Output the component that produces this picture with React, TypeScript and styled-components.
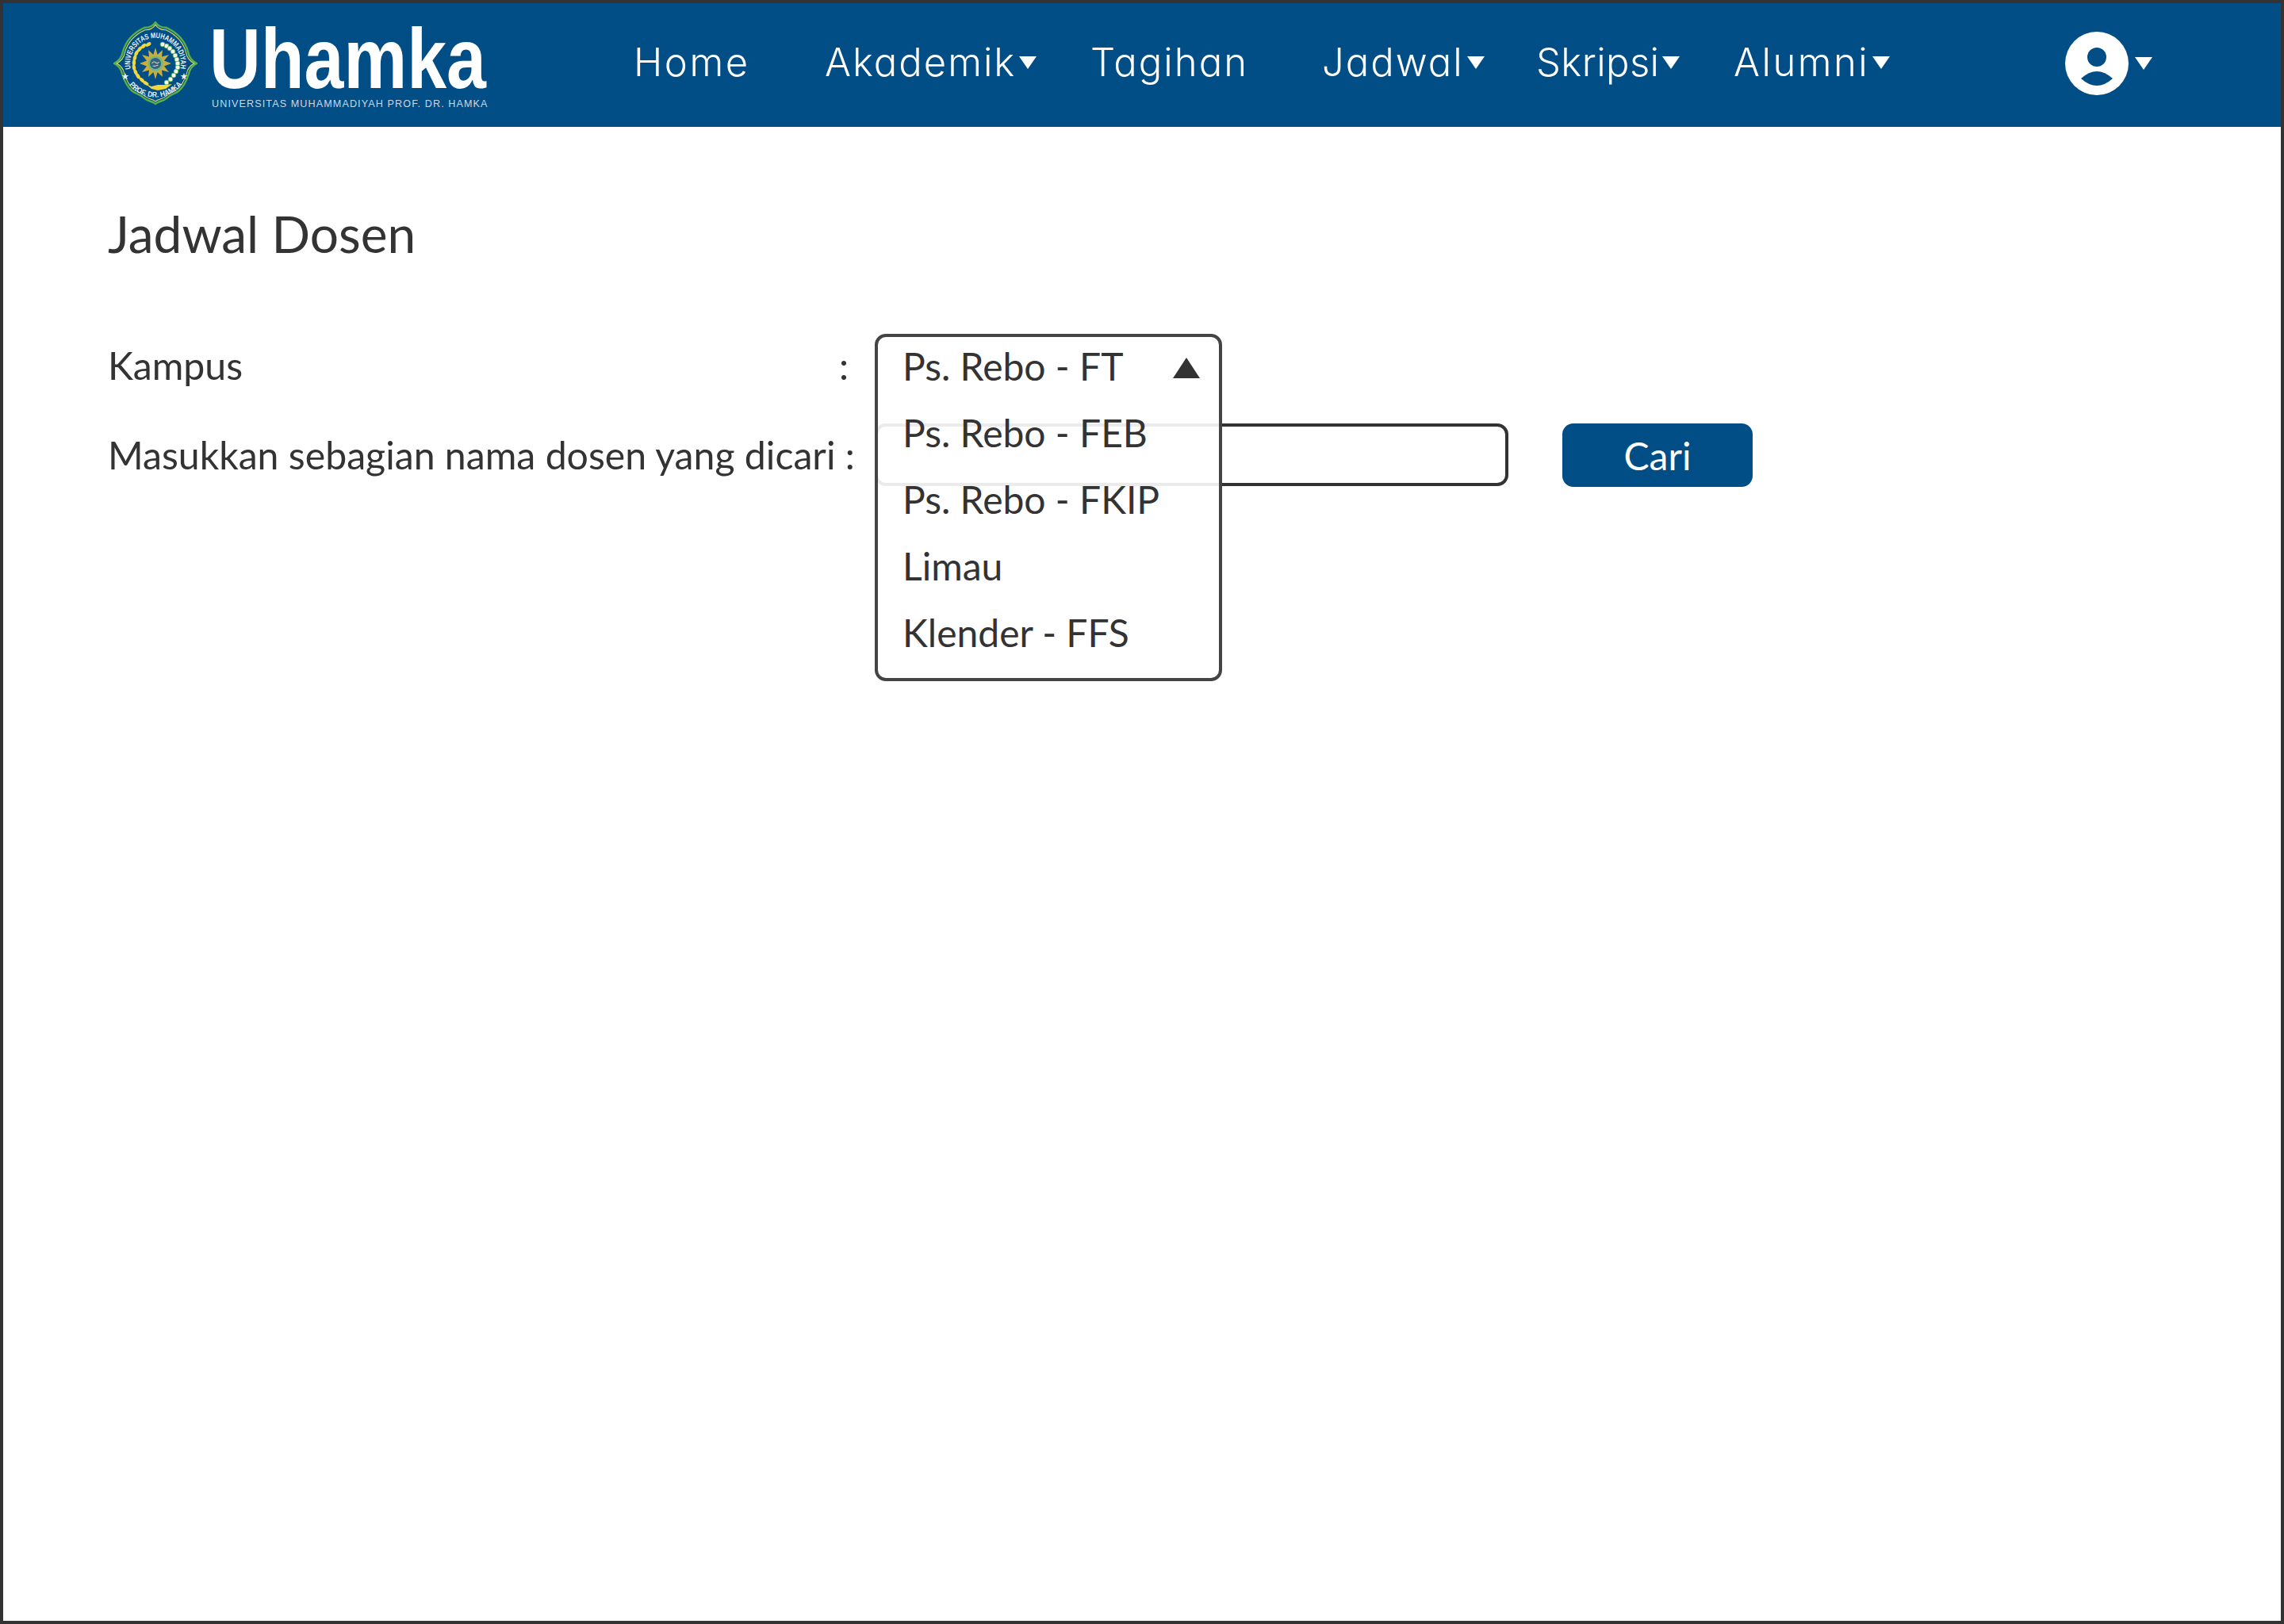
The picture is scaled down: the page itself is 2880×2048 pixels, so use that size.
import React from 'react';
import styled, { createGlobalStyle } from 'styled-components';

const Global = createGlobalStyle`
  html, body { margin: 0; padding: 0; background: #fff; }
  * { box-sizing: border-box; }
`;

const Page = styled.div`
  width: 2880px;
  height: 2048px;
  border: 4px solid #333;
  background: #fff;
  font-family: Lato, "Liberation Sans", sans-serif;
  color: #333;
`;

const Header = styled.header`
  height: 156px;
  background: #014e86;
  display: flex;
  align-items: center;
  padding-left: 139px;
`;

const Brand = styled.div`
  width: 656px;
  display: flex;
  align-items: center;
  gap: 18px;
  padding-bottom: 4px;
`;

const Wordmark = styled.div`
  display: flex;
  flex-direction: column;
  gap: 4px;
  width: 350px;
`;

const BrandName = styled.svg`
  display: block;
  width: 350px;
  height: 97px;
  overflow: visible;
  fill: #fff;
  font-family: "Liberation Sans", sans-serif;
  font-weight: 700;
  font-size: 107px;
`;

const BrandSub = styled.span`
  font-family: "Liberation Sans", sans-serif;
  font-size: 12.6px;
  line-height: 14px;
  letter-spacing: 1.1px;
  color: #c9d6e2;
  white-space: nowrap;
`;

const Nav = styled.nav`
  display: flex;
  align-items: center;
  padding-bottom: 6px;
`;

const NavItem = styled.div<{ $w: number; $ls: number }>`
  width: ${(p) => p.$w}px;
  display: flex;
  align-items: center;
  gap: 4px;
  font-family: Inter, sans-serif;
  font-feature-settings: "cv11";
  font-weight: 300;
  font-size: 49px;
  letter-spacing: ${(p) => p.$ls}px;
  line-height: 60px;
  color: #fff;
  white-space: nowrap;
`;

const Caret = styled.svg`
  width: 22px;
  height: 16px;
  fill: #fff;
  flex: none;
`;

const Account = styled.div`
  margin-left: 250px;
  display: flex;
  align-items: center;
  gap: 8px;
  padding-bottom: 4px;
`;

const Main = styled.main`
  padding: 93px 0 0 132px;
`;

const Title = styled.h1`
  margin: 0;
  font-size: 64px;
  font-weight: 400;
  line-height: 84px;
`;

const Form = styled.div`
  margin-top: 84px;
  display: flex;
  flex-direction: column;
  gap: 34px;
`;

const Row = styled.div`
  display: flex;
  align-items: center;
  height: 79px;
  font-size: 48.2px;
`;

const Label = styled.label`
  width: 967px;
  display: flex;
  justify-content: space-between;
  padding-right: 33px;
  padding-bottom: 1px;
  white-space: nowrap;
`;

const SelectAnchor = styled.div`
  position: relative;
  width: 438px;
  height: 79px;
`;

const Dropdown = styled.div`
  position: absolute;
  z-index: 2;
  top: 0;
  left: 0;
  width: 438px;
  height: 438px;
  border: 4px solid #444;
  border-radius: 14px;
  background: rgba(255, 255, 255, 0.9);
  padding: 0 0 0 31px;
`;

const OptionList = styled.div`
  margin-top: -6px;
`;

const Option = styled.div`
  height: 84px;
  display: flex;
  align-items: center;
  font-size: 48px;
`;

const CaretUp = styled.svg`
  position: absolute;
  right: 24px;
  top: 26px;
  width: 34px;
  height: 26px;
  fill: #333;
`;

const Input = styled.input`
  width: 799px;
  height: 79px;
  border: 4px solid #333;
  border-radius: 14px;
  background: #fff;
  outline: none;
  flex: none;
`;

const Button = styled.button`
  margin-left: 68px;
  width: 240px;
  height: 80px;
  border: none;
  border-radius: 14px;
  background: #014e86;
  color: #fff;
  font-family: Lato, sans-serif;
  font-size: 48px;
  padding: 2px 0 0;
`;

const SEAL_OUTLINE =
  'M53 1 C56 6 61 8 67 8 C80 14 90 24 94 38 C95 44 99 50 105 53 C99 56 96 61 95 66 C91 79 87 84 82 88 C78 91 72 92 67 97 C63 101 57 100 53 104 C49 100 43 101 39 97 C34 92 28 91 24 88 C19 84 15 79 11 66 C10 61 7 56 1 53 C7 50 11 44 12 38 C16 24 26 14 39 8 C45 8 50 6 53 1 Z';

function Seal() {
  const wheat = [
    [44, 29, 58], [38, 31, 48], [33, 35, 38], [29, 40, 26], [27, 46, 14], [26, 52, 2],
    [26, 58, -10], [28, 64, -22], [31, 69, -34], [36, 74, -46], [41, 78, -58],
  ];
  const beads = [
    [62, 29], [67, 31], [71, 34], [75, 38], [78, 43], [80, 48], [81, 53], [81, 58], [79, 63], [76, 68], [72, 73], [67, 77],
  ];
  return (
    <svg width="106" height="106" viewBox="0 0 106 106" style={{ flex: 'none' }}>
      <path d={SEAL_OUTLINE} fill="#014e86" stroke="#57b146" strokeWidth="2.4" />
      <path d={SEAL_OUTLINE} fill="none" stroke="#e6dc62" strokeWidth="1.1" transform="translate(53 53) scale(.94) translate(-53 -53)" />
      <defs>
        <path id="sealTop" d="M21.8 60 A32 32 0 1 1 84.2 60" />
        <path id="sealBottom" d="M20 80 A42.6 42.6 0 0 0 86 80" />
      </defs>
      <text fontFamily="Liberation Sans, sans-serif" fontWeight="700" fontSize="9.6" fill="#e8eef3">
        <textPath href="#sealTop" textLength="114" lengthAdjust="spacingAndGlyphs">UNIVERSITAS MUHAMMADIYAH</textPath>
      </text>
      <text fontFamily="Liberation Sans, sans-serif" fontWeight="700" fontSize="9.6" fill="#e8eef3">
        <textPath href="#sealBottom" textLength="76" lengthAdjust="spacingAndGlyphs">PROF. DR. HAMKA</textPath>
      </text>
      {wheat.map(([x, y, r], i) => (
        <ellipse key={i} cx={x} cy={y} rx="2.2" ry="3.8" transform={`rotate(${r} ${x} ${y})`} fill="#f0d63f" />
      ))}
      {beads.map(([x, y], i) => (
        <circle key={i} cx={x} cy={y} r="2.9" fill="#f6fbf2" stroke="#55b048" strokeWidth=".8" />
      ))}
      <path
        d="M53 33 L55.6 42 L62 36 L61 44.5 L70 42 L64 49.5 L73 53 L64 56.5 L70 64 L61 61.5 L62 70 L55.6 64 L53 73 L50.4 64 L44 70 L45 61.5 L36 64 L42 56.5 L33 53 L42 49.5 L36 42 L45 44.5 L44 36 L50.4 42 Z"
        fill="#c9ad3f"
      />
      <circle cx="53" cy="53" r="9.6" fill="#6fb886" />
      <circle cx="53" cy="53" r="7" fill="#35607f" />
      <path d="M48.5 53 q2.5 -3.5 5 -1 q2.5 2 4 -1 M49.5 56 q3.5 1 7 -1" stroke="#c9d3a9" strokeWidth="1.1" fill="none" />
      <path d="M41 79 L48 82 L56 80 L66 80 L74 79 L66 85 L56 87 L48 85 Z" fill="#f0d63f" />
      <path d="M15 65 l1.2 3 3.2 .1 -2.6 2 1 3.1 -2.8 -1.8 -2.8 1.8 1 -3.1 -2.6 -2 3.2 -.1 Z" fill="#e8eef3" />
      <path d="M89 65 l1.2 3 3.2 .1 -2.6 2 1 3.1 -2.8 -1.8 -2.8 1.8 1 -3.1 -2.6 -2 3.2 -.1 Z" fill="#e8eef3" />
    </svg>
  );
}

function DownCaret() {
  return (
    <Caret viewBox="0 0 22 16">
      <path d="M0 0 H22 L11 16 Z" />
    </Caret>
  );
}

function Avatar() {
  return (
    <svg width="80" height="80" viewBox="0 0 80 80">
      <circle cx="40" cy="40" r="40" fill="#fff" />
      <circle cx="40" cy="32" r="12" fill="#014e86" />
      <path d="M20 59 Q40 41 60 59 Q40 77 20 59 Z" fill="#014e86" />
    </svg>
  );
}

const navItems = [
  { label: 'Home', w: 241, ls: 2.6, caret: false },
  { label: 'Akademik', w: 335, ls: 2, caret: true },
  { label: 'Tagihan', w: 292, ls: 2, caret: false },
  { label: 'Jadwal', w: 270, ls: 2, caret: true },
  { label: 'Skripsi', w: 249, ls: 0.4, caret: true },
  { label: 'Alumni', w: 168, ls: 2.5, caret: true },
];

const options = ['Ps. Rebo - FT', 'Ps. Rebo - FEB', 'Ps. Rebo - FKIP', 'Limau', 'Klender - FFS'];

export default function App() {
  return (
    <Page>
      <Global />
      <Header>
        <Brand>
          <Seal />
          <Wordmark>
            <BrandName viewBox="0 0 350 97">
              <text x="-3" y="87.5" textLength="349" lengthAdjust="spacingAndGlyphs">Uhamka</text>
            </BrandName>
            <BrandSub>UNIVERSITAS MUHAMMADIYAH PROF. DR. HAMKA</BrandSub>
          </Wordmark>
        </Brand>
        <Nav>
          {navItems.map((n) => (
            <NavItem key={n.label} $w={n.w} $ls={n.ls}>
              {n.label}
              {n.caret && <DownCaret />}
            </NavItem>
          ))}
        </Nav>
        <Account>
          <Avatar />
          <DownCaret />
        </Account>
      </Header>
      <Main>
        <Title>Jadwal Dosen</Title>
        <Form>
          <Row>
            <Label>
              <span>Kampus</span>
              <span>:</span>
            </Label>
            <SelectAnchor>
              <Dropdown>
                <OptionList>
                  {options.map((o) => (
                    <Option key={o}>{o}</Option>
                  ))}
                </OptionList>
                <CaretUp viewBox="0 0 34 26">
                  <path d="M17 0 L34 26 H0 Z" />
                </CaretUp>
              </Dropdown>
            </SelectAnchor>
          </Row>
          <Row>
            <Label>
              <span>Masukkan sebagian nama dosen yang dicari :</span>
            </Label>
            <Input aria-label="Nama dosen" />
            <Button>Cari</Button>
          </Row>
        </Form>
      </Main>
    </Page>
  );
}
